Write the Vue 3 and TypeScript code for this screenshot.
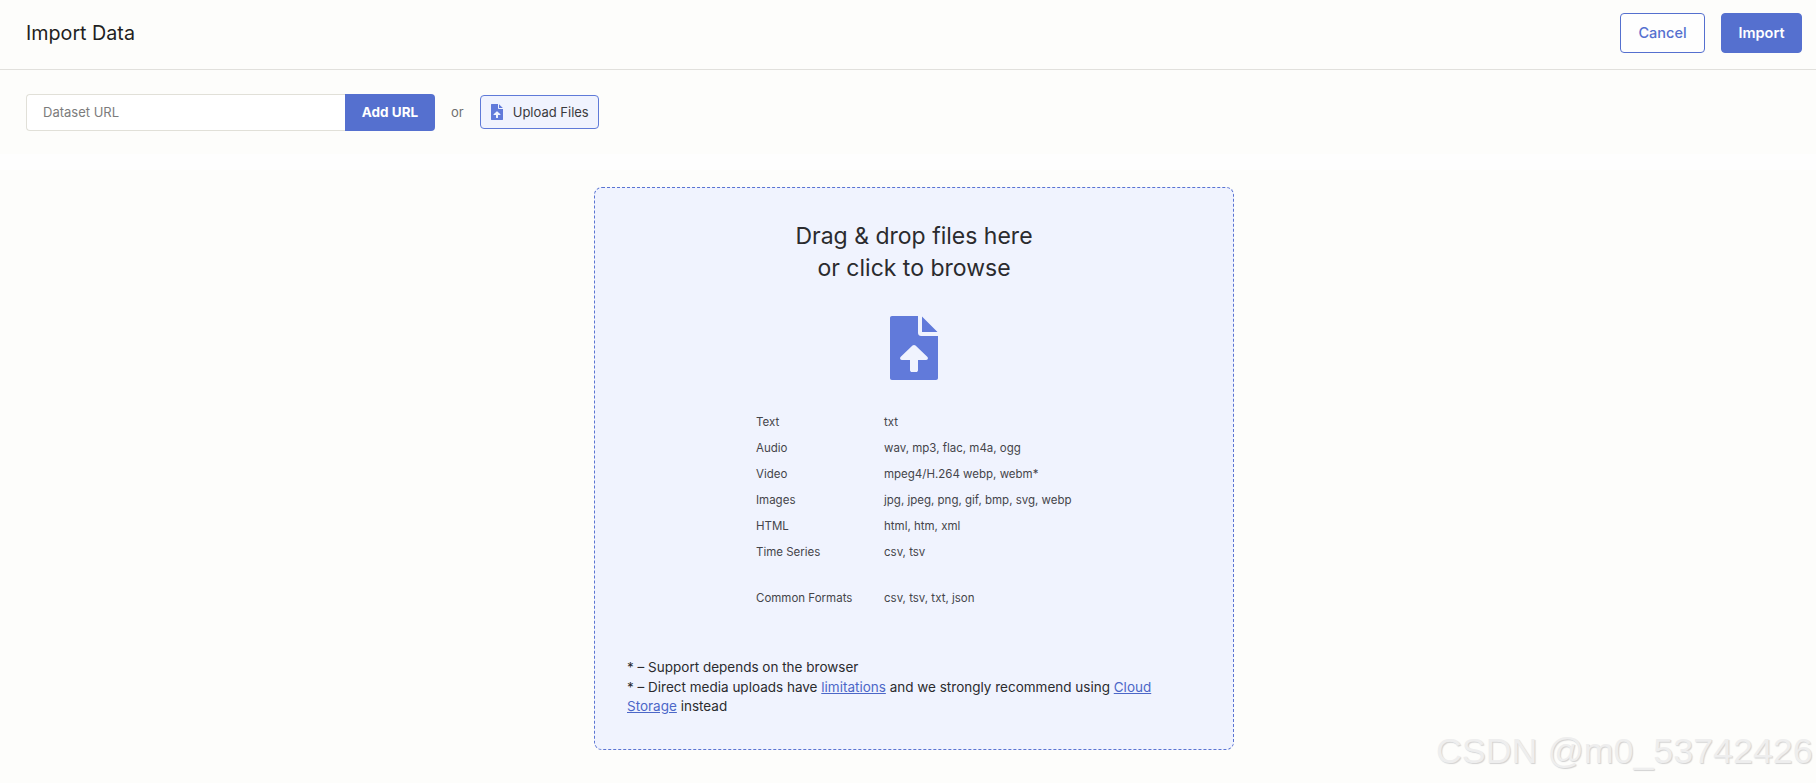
<template>
  <div class="page">
    <header class="header">
      <h1 class="title">Import Data</h1>
      <div class="actions">
        <button class="btn btn-outline">Cancel</button>
        <button class="btn btn-primary">Import</button>
      </div>
    </header>

    <section class="toolbar">
      <div class="url-group">
        <input class="url-input" type="text" placeholder="Dataset URL" />
        <button class="add-url">Add URL</button>
      </div>
      <span class="or">or</span>
      <button class="upload-btn">
        <svg class="upload-icon" viewBox="0 0 48 64" aria-hidden="true">
          <path :d="fileIcon" fill="#617ada" fill-rule="evenodd" />
        </svg>
        Upload Files
      </button>
    </section>

    <div class="band"></div>

    <main class="content">
      <div class="dropzone">
        <h2 class="drop-title">Drag &amp; drop files here<br />or click to browse</h2>
        <svg class="drop-icon" viewBox="0 0 48 64" aria-hidden="true">
          <path :d="fileIcon" fill="#617ada" fill-rule="evenodd" />
        </svg>
        <dl class="formats">
          <div v-for="row in formats" :key="row.label" class="format-row">
            <dt>{{ row.label }}</dt>
            <dd>{{ row.types }}</dd>
          </div>
          <div class="format-row common">
            <dt>Common Formats</dt>
            <dd>csv, tsv, txt, json</dd>
          </div>
        </dl>
        <p class="notes">
          * – Support depends on the browser<br />
          * – Direct media uploads have <a href="#">limitations</a> and we strongly recommend using
          <a href="#">Cloud Storage</a> instead
        </p>
      </div>
    </main>

    <div class="watermark">CSDN @m0_53742426</div>
  </div>
</template>

<script setup lang="ts">
interface FormatRow {
  label: string
  types: string
}

const formats: FormatRow[] = [
  { label: 'Text', types: 'txt' },
  { label: 'Audio', types: 'wav, mp3, flac, m4a, ogg' },
  { label: 'Video', types: 'mpeg4/H.264 webp, webm*' },
  { label: 'Images', types: 'jpg, jpeg, png, gif, bmp, svg, webp' },
  { label: 'HTML', types: 'html, htm, xml' },
  { label: 'Time Series', types: 'csv, tsv' }
]

// file with fold and up arrow, arrow is cut out of the body
const fileIcon =
  'M2 0H28V17C28 19 29.500 20 31 20H48V62C48 63.200 47.200 64 46 64H2C0.800 64 0 63.200 0 62V2C0 0.800 0.800 0 2 0Z' +
  'M32 0.500L47.500 16H32Z' +
  'M22.500 29.500L10.500 41C9.500 42.200 10.300 44 12 44H20V54C20 55.500 21 56 22 56H26C27 56 28 55.500 28 54V44H36C37.700 44 38.500 42.200 37.500 41L25.500 29.500C24.700 28.700 23.300 28.700 22.500 29.500Z'
</script>

<style>
html,
body {
  margin: 0;
  background: #fdfdfb;
}
</style>

<style scoped>
.page {
  position: relative;
  height: 783px;
  overflow: hidden;
  background: #fdfdfb;
  color: #1f1f22;
  font-family: Inter, "Noto Sans", sans-serif;
}

.header {
  display: flex;
  align-items: center;
  justify-content: space-between;
  box-sizing: border-box;
  height: 70px;
  padding: 0 14px 4px 26px;
  border-bottom: 1px solid #e1e0dc;
}

.title {
  margin: 0;
  font-size: 19.700px;
  font-weight: 400;
  line-height: 24px;
}

.actions {
  display: flex;
  gap: 16px;
}

.btn {
  box-sizing: border-box;
  height: 40px;
  border-radius: 4px;
  font-family: inherit;
  font-size: 14.500px;
  font-weight: 600;
}

.btn-outline {
  width: 85px;
  border: 1px solid #5570cf;
  background: #fefefe;
  color: #5570cf;
  font-weight: 500;
}

.btn-primary {
  width: 81px;
  border: 1px solid #5570cf;
  background: #5570cf;
  color: #fff;
}

.toolbar {
  display: flex;
  align-items: center;
  box-sizing: border-box;
  height: 84px;
  padding-left: 26px;
}

.url-group {
  display: flex;
  height: 37px;
}

.url-input {
  box-sizing: border-box;
  width: 319px;
  padding: 0 16px;
  border: 1px solid #e1e0d8;
  border-right: 0;
  border-radius: 4px 0 0 4px;
  outline: 0;
  background: #fff;
  font-family: inherit;
  font-size: 13px;
}

.url-input::placeholder {
  color: #7c7c7c;
}

.add-url {
  width: 90px;
  border: 0;
  border-radius: 0 4px 4px 0;
  background: #5570cf;
  color: #fff;
  font-family: inherit;
  font-size: 13.500px;
  font-weight: 700;
}

.or {
  margin: 0 16px;
  color: #6f6f6f;
  font-size: 13px;
}

.upload-btn {
  display: flex;
  align-items: center;
  gap: 10px;
  box-sizing: border-box;
  width: 119px;
  height: 34px;
  padding: 0 0 0 10px;
  border: 1px solid #5f7ad8;
  border-radius: 4px;
  background: #f0f3fe;
  color: #3a3a3d;
  font-family: inherit;
  font-size: 13px;
  font-weight: 400;
}

.upload-icon {
  width: 12px;
  height: 16px;
  flex: none;
}

.band {
  height: 16px;
  background: #fefefe;
}

.content {
  display: flex;
  justify-content: center;
  padding: 17px 0 0 12px;
}

.dropzone {
  display: flex;
  flex-direction: column;
  align-items: center;
  box-sizing: border-box;
  width: 640px;
  height: 563px;
  padding: 32px 32px 0;
  border: 1px dashed #5a74d2;
  border-radius: 8px;
  background: #f0f3fe;
}

.drop-title {
  margin: 0;
  font-size: 23px;
  font-weight: 400;
  line-height: 32px;
  text-align: center;
  color: #2b2b2e;
}

.drop-icon {
  width: 48px;
  height: 64px;
  margin-top: 32px;
}

.formats {
  align-self: flex-start;
  margin: 34px 0 0 129px;
  font-size: 11.500px;
  line-height: 16px;
  color: #45454a;
}

.format-row {
  display: flex;
  margin-bottom: 10px;
}

.format-row.common {
  margin-top: 30px;
  margin-bottom: 0;
}

.format-row dt {
  width: 128px;
}

.format-row dd {
  margin: 0;
}

.notes {
  align-self: stretch;
  margin: 52px 0 0;
  font-size: 13.500px;
  line-height: 19.500px;
  color: #2b2b2e;
}

.notes a {
  color: #4c67c8;
}

.watermark {
  position: absolute;
  left: 1436px;
  top: 731px;
  font-family: "Liberation Sans", sans-serif;
  font-size: 35.800px;
  line-height: 41px;
  white-space: nowrap;
  color: #eeeeee;
  text-shadow: 1px 1px 1px #d2d2d2;
}
</style>
